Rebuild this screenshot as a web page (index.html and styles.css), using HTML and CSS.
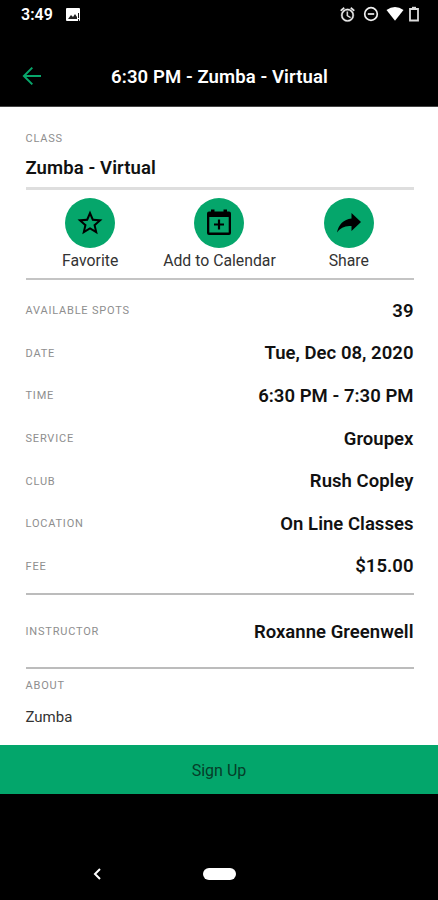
FILE: index.html
```html
<!DOCTYPE html>
<html lang="en">
<head>
<meta charset="utf-8">
<title>6:30 PM - Zumba - Virtual</title>
<link rel="stylesheet" href="styles.css">
</head>
<body>
<div class="status">
  <span class="clock">3:49</span>
  <svg class="photo" width="14" height="14" viewBox="0 0 14 14"><rect width="14" height="13" rx="1" fill="#fff"/><path d="M2 11l3-4 2 2 2-3 2 3V11z" fill="#222"/><path d="M12.500 5v5M12.500 11v2" stroke="#111" stroke-width="1"/></svg>
  <div class="indicators">
    <svg width="17" height="17" viewBox="0 0 24 24" fill="#eee" stroke="#eee" stroke-width=".5"><path d="M22 5.720l-4.600-3.860-1.290 1.530 4.600 3.860L22 5.720zM7.880 3.390L6.600 1.860 2 5.710l1.290 1.530 4.590-3.850zM12.500 8H11v6l4.750 2.850.75-1.230-4-2.370V8zM12 4a9 9 0 100 18 9 9 0 000-18zm0 16a7 7 0 110-14 7 7 0 010 14z"/></svg>
    <svg width="16" height="16" viewBox="0 0 16 16" fill="none" stroke="#eee" stroke-width="1.700"><circle cx="8" cy="8" r="6.300"/><path d="M4.800 8h6.400"/></svg>
    <svg width="18" height="16" viewBox="0 0 18 16"><path d="M.5 4Q9-2 17.500 4L9 14.800z" fill="#fff"/></svg>
    <svg width="10" height="16" viewBox="0 0 10 16"><path d="M1 3h8v11.500H1z" fill="none" stroke="#ddd" stroke-width="1.800"/><path d="M3 .8h4v2H3z" fill="#ddd"/></svg>
  </div>
</div>
<header class="bar">
  <svg class="back" width="20" height="20" viewBox="0 0 20 20" fill="none" stroke="#08a66b" stroke-width="2"><path d="M19 10H2M10.300 1.600L1.900 10l8.400 8.400"/></svg>
  <h1>6:30 PM - Zumba - Virtual</h1>
</header>
<main>
  <section class="class">
    <div class="label">CLASS</div>
    <h2>Zumba - Virtual</h2>
  </section>
  <section class="actions">
    <div class="action">
      <div class="disc"><svg width="30" height="30" viewBox="0 0 24 24"><path d="M22 9.240l-7.190-.62L12 2 9.190 8.630 2 9.240l5.460 4.730L5.820 21 12 17.270 18.180 21l-1.630-7.030L22 9.240zM12 15.400l-3.760 2.270 1-4.280-3.320-2.880 4.380-.38L12 6.100l1.710 4.040 4.380.38-3.320 2.880 1 4.280L12 15.400z"/></svg></div>
      <span>Favorite</span>
    </div>
    <div class="action">
      <div class="disc"><svg width="30" height="30" viewBox="0 0 30 30"><path d="M5 3.500h2V1.500h3.500v2h9V1.500H23v2h2a2 2 0 012 2V25a2 2 0 01-2 2H5a2 2 0 01-2-2V5.500a2 2 0 012-2zM5.300 9v15.500h19.400V9z" fill-rule="evenodd"/><path d="M15 11.500v10M10 16.500h10" stroke="#000" stroke-width="2.200"/></svg></div>
      <span>Add to Calendar</span>
    </div>
    <div class="action">
      <div class="disc"><svg width="30" height="30" viewBox="0 0 30 30"><path d="M17.500 5L27 14l-9.500 9v-5Q8 17 3 24.500 5.500 12 17.500 10.500z"/></svg></div>
      <span>Share</span>
    </div>
  </section>
  <section class="details">
    <div class="row"><span class="label">AVAILABLE SPOTS</span><b>39</b></div>
    <div class="row"><span class="label">DATE</span><b>Tue, Dec 08, 2020</b></div>
    <div class="row"><span class="label">TIME</span><b>6:30 PM - 7:30 PM</b></div>
    <div class="row"><span class="label">SERVICE</span><b>Groupex</b></div>
    <div class="row"><span class="label">CLUB</span><b>Rush Copley</b></div>
    <div class="row"><span class="label">LOCATION</span><b>On Line Classes</b></div>
    <div class="row"><span class="label">FEE</span><b>$15.00</b></div>
  </section>
  <section class="instructor">
    <div class="row"><span class="label">INSTRUCTOR</span><b>Roxanne Greenwell</b></div>
  </section>
  <section class="about">
    <div class="label">ABOUT</div>
    <p>Zumba</p>
  </section>
</main>
<button class="signup">Sign Up</button>
<nav>
  <svg class="nav-back" width="10" height="14" viewBox="0 0 10 14" fill="none" stroke="#fff" stroke-width="2"><path d="M8 2L3 7l5 5"/></svg>
  <span class="home"></span>
</nav>
</body>
</html>
```
FILE: styles.css
```css
* { box-sizing: border-box; margin: 0; }
body { width: 438px; height: 900px; background: #000; font-family: Roboto, sans-serif; display: flex; flex-direction: column; overflow: hidden; }
.status { height: 46px; padding: 6px 19px 0 21px; display: flex; align-items: flex-start; }
.clock { color: #fff; font-size: 16px; line-height: 18px; font-weight: 600; width: 45px; }
.photo { margin-top: 2px; }
.indicators { margin-left: auto; display: flex; }
.indicators svg:nth-child(2) { margin-left: 7px; }
.indicators svg:nth-child(3) { margin-left: 7px; }
.indicators svg:nth-child(4) { margin-left: 5px; }
.bar { height: 61px; display: flex; align-items: center; justify-content: center; position: relative; border-bottom: 1px solid #444; }
.back { position: absolute; left: 22px; top: 20px; }
h1 { color: #fff; font-size: 18.500px; font-weight: 600; line-height: 24px; padding: 2px 0 0 1px; letter-spacing: .1px; }
main { height: 638px; background: #fff; padding: 0 24.500px 0 25.500px; }
.label { font-size: 11px; line-height: 14px; color: #8e8e8e; letter-spacing: .8px; }
.class { height: 83px; padding-top: 25px; border-bottom: 3px solid #dedede; }
h2 { font-size: 18.500px; font-weight: 600; line-height: 24px; margin-top: 10px; color: #111; letter-spacing: .1px; }
.actions { height: 90px; display: grid; grid-template-columns: repeat(3, 1fr); padding-top: 8px; border-bottom: 2px solid #c4c4c4; }
.action { display: flex; flex-direction: column; align-items: center; font-size: 15.800px; line-height: 22px; color: #333; white-space: nowrap; }
.disc { width: 50px; height: 50px; border-radius: 50%; background: #05a66b; display: flex; align-items: center; justify-content: center; margin-bottom: 2px; }
.details { height: 315px; padding-top: 9px; border-bottom: 2px solid #bcbcbc; }
.row { display: flex; align-items: center; justify-content: space-between; height: 42.600px; }
.row .label { padding-top: 2px; }
b { font-size: 18.500px; font-weight: 600; color: #111; letter-spacing: .03px; padding-top: 1px; }
.instructor { height: 74px; padding-top: 15px; border-bottom: 2px solid #bcbcbc; }
.about { padding-top: 10px; }
.about p { font-size: 15px; line-height: 22px; margin-top: 13px; color: #333; }
.signup { height: 49px; border: 0; background: #03a66b; color: #063d29; font: 16px Roboto, sans-serif; padding: 2px 0 0; }
nav { flex: 1; display: grid; grid-template-columns: 92px 111px 32px; align-items: start; padding-top: 74px; }
.nav-back { grid-column: 2; margin-top: -1px; }
.home { grid-column: 3; width: 33px; height: 12px; border-radius: 6px; background: #fff; }
```
